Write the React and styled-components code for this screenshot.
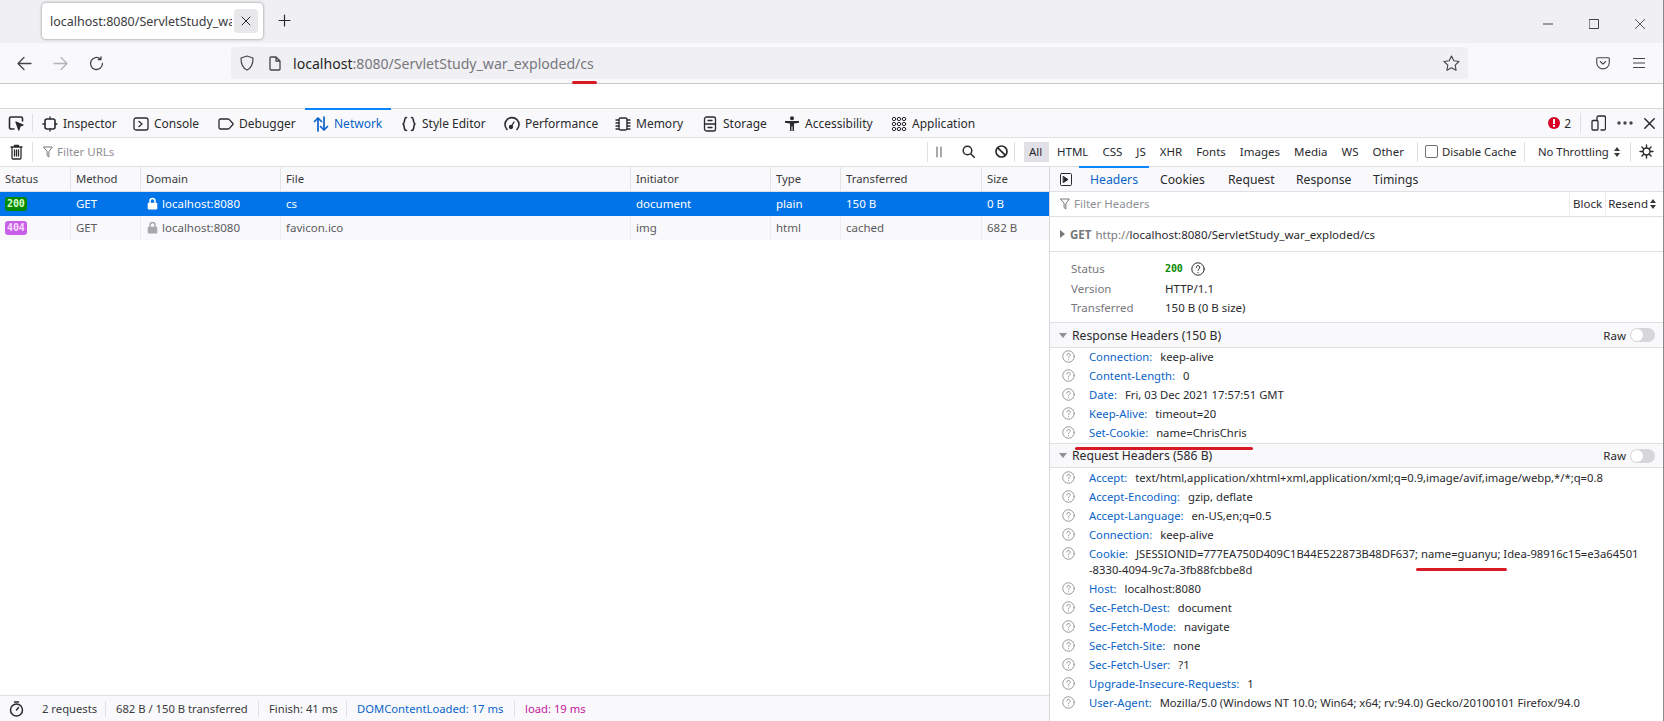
import React from "react";
import styled, { createGlobalStyle } from "styled-components";

const Global = createGlobalStyle`
  html, body { margin: 0; padding: 0; background: #fff; }
  body { font-family: "Noto Sans", "Liberation Sans", sans-serif; font-size: 11.5px; color: #2a2a2e; }
  * { box-sizing: border-box; }
`;

const Page = styled.div`
  position: relative; width: 1664px; height: 721px; overflow: hidden;
  display: flex; flex-direction: column; border-right: 1px solid #8a8a8a;
`;
const TabStrip = styled.div`
  height: 43px; background: #f0f0f4; display: flex; align-items: flex-start; padding: 3px 0 0 42px; flex: none;
`;
const BrowserTab = styled.div`
  width: 221px; height: 36px; background: #fff; border-radius: 4px; box-shadow: 0 0 3px rgba(0,0,0,.45);
  display: flex; align-items: center; padding: 0 5px 0 8px; gap: 2px;
`;
const TabTitle = styled.span`
  flex: 1; overflow: hidden; white-space: nowrap; font-size: 12.5px; color: #3c3c40;
`;
const TabClose = styled.span`
  width: 24px; height: 24px; background: #e8e8ea; border-radius: 4px; display: flex; align-items: center; justify-content: center; flex: none;
`;
const NewTab = styled.span`
  margin: 11px 0 0 15px; display: flex;
`;
const WinControls = styled.div`
  margin-left: auto; display: flex; gap: 36px; padding: 16px 18px 0 0;
`;
const NavBar = styled.div`
  height: 41px; background: #f9f9fb; border-bottom: 1px solid #c9c9cc; display: flex; align-items: flex-start; padding: 4px 0 0 17px; flex: none;
`;
const NavButtons = styled.div`
  display: flex; gap: 21px; width: 214px; padding-top: 9px;
`;
const UrlBar = styled.div`
  width: 1237px; height: 32px; border-radius: 4px; background: #f0f0f4; display: flex; align-items: center; padding: 0 8px 0 9px;
`;
const PageIconSlot = styled.span`
  width: 27px; display: flex; justify-content: flex-end; color: #45454a; flex: none;
`;
const Url = styled.span`
  font-size: 14.1px; color: #77777c; margin-left: 12px; flex: 1; white-space: nowrap;
  b { font-weight: 400; color: #1f1f23; }
`;
const NavRight = styled.div`
  display: flex; gap: 23px; padding: 10px 0 0 128px;
`;
const BlankPage = styled.div`
  height: 25px; flex: none; background: #fff; border-bottom: 1px solid #d7d7db;
`;
const DevBar = styled.div`
  height: 29px; flex: none; background: #f9f9fb; border-bottom: 1px solid #e0e0e2; display: flex; align-items: stretch;
`;
const PickSlot = styled.div`
  width: 36px; display: flex; align-items: center; padding-left: 8px; position: relative;
  &::after { content: ""; position: absolute; right: 3px; top: 5px; bottom: 5px; width: 1px; background: #e0e0e2; }
`;
const DevTab = styled.div`
  width: ${p => p.$w}px; padding-left: ${p => p.$pad}px; display: flex; align-items: center; gap: 5px; font-size: 12px; white-space: nowrap;
  color: ${p => (p.$active ? "#0a63c9" : "#2a2a2e")};
  border-top: 2px solid ${p => (p.$active ? "#0a84ff" : "transparent")};
  margin-top: -1px;
`;
const DevRight = styled.div`
  margin-left: auto; display: flex; align-items: center; padding-right: 8px;
`;
const ErrorCount = styled.span`
  display: flex; align-items: center; gap: 4px; font-size: 12px; padding-right: 9px; border-right: 1px solid #e0e0e2; height: 20px;
`;
const DevRightIcons = styled.span`
  display: flex; align-items: center; gap: 11px; padding-left: 10px;
`;
const FilterBar = styled.div`
  height: 29px; flex: none; background: #fff; border-bottom: 1px solid #e0e0e2; display: flex; align-items: center; padding-bottom: 1px;
`;
const Trash = styled.span`
  width: 33px; height: 20px; padding-left: 10px; border-right: 1px solid #e0e0e2; display: flex; align-items: center; flex: none;
`;
const FilterInput = styled.span`
  display: flex; align-items: center; gap: 4px; color: #8f8f94; font-size: 11.5px; padding-left: ${p => p.$pad || 10}px;
`;
const FilterTools = styled.div`
  margin-left: auto; display: flex; align-items: center; height: 100%;
`;
const ToolGroup = styled.span`
  display: flex; align-items: center; height: 20px; gap: ${p => p.$gap || 0}px; padding: ${p => p.$pad || "0"};
  border-left: 1px solid #e0e0e2; width: ${p => (p.$w ? `${p.$w}px` : "auto")}; flex: none; white-space: nowrap; font-size: 11.3px;
`;
const TypeBtn = styled.span`
  font-size: 11.5px; padding: 0 3px; margin-right: 8px; height: 20px; display: flex; align-items: center;
  background: ${p => (p.$on ? "#e0e0e6" : "transparent")};
  ${p => p.$on && "padding: 0 5px; margin-right: 5px; width: 25px;"}
`;
const Check = styled.span`
  width: 13px; height: 13px; border: 1px solid #6f6f74; border-radius: 2px; background: #fff; flex: none;
`;
const Main = styled.div`
  flex: 1; display: flex; min-height: 0;
`;
const LeftPane = styled.div`
  width: 1050px; flex: none; display: flex; flex-direction: column; border-right: 1px solid #d7d7db;
`;
const cols = "71px 70px 140px 350px 140px 70px 141px 67px";
const HeadRow = styled.div`
  height: 25px; display: grid; grid-template-columns: ${cols}; background: #f9f9fb; border-bottom: 1px solid #e0e0e2; flex: none;
`;
const HeadCell = styled.div`
  padding: 0 0 2px 5px; display: flex; align-items: center; border-right: 1px solid #e4e4e7; color: #3a3a3e; font-size: 11.3px;
  &:last-child { border-right: 0; }
`;
const Row = styled.div`
  height: 24px; display: grid; grid-template-columns: ${cols}; flex: none;
  background: ${p => (p.$sel ? "#0074e8" : "#f9f9fb")};
  color: ${p => (p.$sel ? "#fff" : "#5b5b60")};
`;
const Cell = styled.div`
  padding: 0 0 1px ${p => p.$pad || 5}px; display: flex; align-items: center; gap: 4px; font-size: 11.5px; white-space: nowrap;
  border-right: 1px solid ${p => (p.$sel ? "transparent" : "#ececef")};
  &:last-child { border-right: 0; }
`;
const Badge = styled.span`
  font-family: "DejaVu Sans Mono", "Liberation Mono", monospace; font-size: 10px; font-weight: 700; color: ${p => p.$c || "#fff"};
  background: ${p => p.$bg}; border-radius: 3px; padding: 0 2px; height: 14px; line-height: 14px; letter-spacing: -.1px;
`;
const Spacer = styled.div`
  flex: 1;
`;
const StatusBar = styled.div`
  height: 26px; flex: none; background: #f9f9fb; border-top: 1px solid #e0e0e2; display: flex; align-items: center; padding-left: 9px; font-size: 11.25px;
`;
const StopwatchSlot = styled.span`
  display: flex; width: 32px; flex: none;
`;
const Stat = styled.span`
  display: flex; align-items: center; height: 16px; padding-left: ${p => (p.$first ? 0 : 10)}px; white-space: nowrap; flex: none;
  width: ${p => p.$w}px;
  color: ${p => p.$c || "#3a3a3e"}; border-left: 1px solid ${p => (p.$first ? "transparent" : "#e0e0e2")};
`;
const Side = styled.div`
  flex: 1; min-width: 0; display: flex; flex-direction: column;
`;
const SideTabs = styled.div`
  height: 25px; flex: none; display: flex; align-items: stretch; background: #f9f9fb; border-bottom: 1px solid #e0e0e2; padding-left: 10px;
`;
const Collapse = styled.span`
  width: 19px; display: flex; align-items: center;
`;
const SideTab = styled.span`
  display: flex; align-items: center; width: ${p => p.$w}px; padding-left: 11px; font-size: 12.2px; margin-top: -1px;
  color: ${p => (p.$active ? "#0a63c9" : "#2a2a2e")};
  border-top: 2px solid ${p => (p.$active ? "#0a84ff" : "transparent")};
`;
const HeaderFilter = styled.div`
  height: 25px; flex: none; display: flex; align-items: center; border-bottom: 1px solid #e0e0e2; padding: 0 7px 1px 0;
`;
const BlockBtn = styled.span`
  margin-left: auto; display: flex; align-items: center; height: 23px; padding: 0 3px; border-left: 1px solid #ececef; border-right: 1px solid #ececef; font-size: 11.5px;
`;
const Resend = styled.span`
  display: flex; align-items: center; gap: 2px; padding-left: 2px; font-size: 11.5px;
`;
const GetRow = styled.div`
  height: 35px; flex: none; display: flex; align-items: center; padding-left: 10px; gap: 5px; border-bottom: 1px solid #e0e0e2; color: #77777c; font-size: 11.5px;
  b { color: #77777c; font-weight: 700; margin-right: 1px; }
  em { font-style: normal; color: #2a2a2e; }
`;
const Tri = styled.span`
  width: 0; height: 0; flex: none;
  ${p => (p.$down
    ? "border-left: 4px solid transparent; border-right: 4px solid transparent; border-top: 5px solid #8f8f94;"
    : "border-top: 4px solid transparent; border-bottom: 4px solid transparent; border-left: 5px solid #77777c;")}
`;
const Summary = styled.div`
  height: 71px; flex: none; padding: 6px 0 0 21px; border-bottom: 1px solid #e0e0e2;
`;
const SummaryRow = styled.div`
  height: ${p => p.$h || 19}px; display: flex; align-items: center; font-size: 11.5px;
`;
const SummaryLabel = styled.span`
  width: 94px; color: #77777c;
`;
const Band = styled.div`
  height: 25px; flex: none; display: flex; align-items: center; background: #f9f9fb; padding: 0 8px 0 9px; gap: 5px;
  border-bottom: 1px solid #e0e0e2; font-size: 12.2px;
  border-top: ${p => (p.$top ? "1px solid #e0e0e2" : "0")};
`;
const Raw = styled.span`
  margin-left: auto; display: flex; align-items: center; gap: 4px; font-size: 11.5px;
`;
const Toggle = styled.span`
  width: 25px; height: 14px; border-radius: 7px; background: #d7d7db; display: flex; align-items: center; padding-left: 1px;
  &::before { content: ""; width: 12px; height: 12px; border-radius: 50%; background: #fff; }
`;
const HeaderList = styled.div`
  padding-top: ${p => p.$top || 0}px; flex: none;
`;
const HeaderRow = styled.div`
  display: flex; align-items: flex-start; min-height: 19px; padding: 1px 0 2px 12px; gap: 14px; font-size: 11.25px; line-height: 16px;
`;
const HelpSlot = styled.span`
  flex: none; display: flex; margin-top: 1px; color: #8f8f94;
`;
const HeaderText = styled.span`
  flex: 1; min-width: 0; padding-right: 8px;
  i { font-style: normal; color: #0a63c9; margin-right: 5px; }
`;
const RedMark = styled.div`
  position: absolute; left: ${p => p.$x}px; top: ${p => p.$y}px; width: ${p => p.$w}px; height: 3px; background: #d91a25; border-radius: 2px;
`;

const Ic = ({ w = 16, h = 16, vb, children, ...r }) => (
  <svg width={w} height={h} viewBox={vb || `0 0 ${w} ${h}`} fill="none" stroke="currentColor" strokeWidth="1.3" strokeLinecap="round" strokeLinejoin="round" style={{ flex: "none" }} {...r}>{children}</svg>
);
const Help = ({ size = 13 }) => (
  <Ic w={size} h={size} vb="0 0 14 14" strokeWidth="1">
    <circle cx="7" cy="7" r="6.2" />
    <path d="M5.2 5.5a1.8 1.8 0 1 1 2.7 1.5c-.6.4-.9.7-.9 1.4" />
    <path d="M7 10.4v.2" />
  </Ic>
);
const Funnel = () => (
  <Ic w={10} h={12} vb="0 0 10 12" strokeWidth="1" color="#77777c"><path d="M.7 1h8.6L5.9 5.6V11L4.1 9.6v-4z" /></Ic>
);

const tabs = [
  { t: "Inspector", w: 91, pad: 6, icon: <Ic><rect x="3" y="3" width="10" height="10" rx="2" strokeWidth="1.6" /><path d="M8 .8v2M8 13v2M.8 8h2M13 8h2" /></Ic> },
  { t: "Console", w: 84, pad: 6, icon: <Ic><rect x="1" y="2" width="14" height="12" rx="2" /><path d="M6 5.5 9 8l-3 2.5" /></Ic> },
  { t: "Debugger", w: 94, pad: 7, icon: <Ic><path d="M2.5 3h7.6c.4 0 .7.1 1 .4l3.6 3.8c.4.5.4 1.1 0 1.6l-3.6 3.8c-.3.3-.6.4-1 .4H2.5c-.8 0-1.5-.7-1.5-1.5v-7C1 3.700 1.700 3 2.500 3z" /></Ic> },
  { t: "Network", w: 86, pad: 8, active: true, icon: <Ic color="#0a63c9" strokeWidth="1.7"><path d="M5 15V2M1.500 5.500 5 2l3.500 3.500M11 1v13M7.500 10.500 11 14l3.500-3.500" /></Ic> },
  { t: "Style Editor", w: 106, pad: 10, icon: <Ic strokeWidth="1.6"><path d="M5.500 1.500c-3 0-1 5.500-3.500 6.500 2.500 1-.5 6.500 3.500 6.500M10.500 1.500c3 0 1 5.500 3.500 6.500-2.500 1 .5 6.500-3.500 6.500" /></Ic> },
  { t: "Performance", w: 105, pad: 7, icon: <Ic><path d="M3 13.500A7 7 0 1 1 13 13.500" strokeWidth="1.600" /><circle cx="7" cy="11" r="1.500" fill="currentColor" /><path d="M7.500 10 10 6" /></Ic> },
  { t: "Memory", w: 93, pad: 13, icon: <Ic><rect x="4" y="2" width="8" height="12" rx="1.500" /><path d="M1 4h3M1 7h3M1 10h3M1 13h3M12 4h3M12 7h3M12 10h3M12 13h3" /></Ic> },
  { t: "Storage", w: 82, pad: 7, icon: <Ic><rect x="2.500" y="1" width="11" height="14" rx="2" /><path d="M2.500 8h11M6 4.500h4M6 11.500h4" /></Ic> },
  { t: "Accessibility", w: 108, pad: 7, icon: <Ic strokeWidth="0" fill="currentColor"><circle cx="8" cy="2.200" r="2" /><path d="M1 5h14v1.800l-5 .7V15H8.500v-4.500h-1V15H6V7.500l-5-.7z" /></Ic> },
  { t: "Application", w: 98, pad: 6, icon: <Ic strokeWidth="1">{[3, 8, 13].flatMap(y => [3, 8, 13].map(x => <circle key={`${x}${y}`} cx={x} cy={y} r="1.700" />))}</Ic> },
];

const respHeaders = [
  ["Connection:", "keep-alive"],
  ["Content-Length:", "0"],
  ["Date:", "Fri, 03 Dec 2021 17:57:51 GMT"],
  ["Keep-Alive:", "timeout=20"],
  ["Set-Cookie:", "name=ChrisChris"],
];
const reqHeaders = [
  ["Accept:", "text/html,application/xhtml+xml,application/xml;q=0.9,image/avif,image/webp,*/*;q=0.8"],
  ["Accept-Encoding:", "gzip, deflate"],
  ["Accept-Language:", "en-US,en;q=0.5"],
  ["Connection:", "keep-alive"],
  ["Cookie:", <React.Fragment key="c">JSESSIONID=777EA750D409C1B44E522873B48DF637; name=guanyu; Idea-98916c15=e3a64501<br />-8330-4094-9c7a-3fb88fcbbe8d</React.Fragment>],
  ["Host:", "localhost:8080"],
  ["Sec-Fetch-Dest:", "document"],
  ["Sec-Fetch-Mode:", "navigate"],
  ["Sec-Fetch-Site:", "none"],
  ["Sec-Fetch-User:", "?1"],
  ["Upgrade-Insecure-Requests:", "1"],
  ["User-Agent:", "Mozilla/5.0 (Windows NT 10.0; Win64; x64; rv:94.0) Gecko/20100101 Firefox/94.0"],
];
const Headers = ({ items }) => items.map(([k, v]) => (
  <HeaderRow key={k}>
    <HelpSlot><Help /></HelpSlot>
    <HeaderText><i>{k}</i> {v}</HeaderText>
  </HeaderRow>
));
const Lock = ({ c }) => (
  <Ic w={11} h={13} vb="0 0 11 13" stroke={c} strokeWidth="1.500"><path d="M3 6V4a2.500 2.500 0 0 1 5 0v2" /><rect x=".7" y="5.700" width="9.600" height="6.800" rx="1" fill={c} strokeWidth="0" /></Ic>
);
const Updown = () => (
  <svg width="6" height="10" viewBox="0 0 6 10" style={{ flex: "none" }}><path d="M3 0 6 4H0zM3 10 0 6h6z" fill="#3a3a3e" /></svg>
);

export default function App() {
  return (
    <Page>
      <Global />
      <TabStrip>
        <BrowserTab>
          <TabTitle>localhost:8080/ServletStudy_war_exploded/cs</TabTitle>
          <TabClose><Ic w={10} h={10} strokeWidth="1"><path d="M1 1l8 8M9 1l-8 8" /></Ic></TabClose>
        </BrowserTab>
        <NewTab><Ic w={13} h={13} strokeWidth="1.200"><path d="M6.500 1v11M1 6.500h11" /></Ic></NewTab>
        <WinControls>
          <Ic w={10} h={10} strokeWidth="1" color="#444"><path d="M0 5h10" /></Ic>
          <Ic w={10} h={10} strokeWidth="1" color="#444"><rect x=".5" y=".5" width="9" height="9" /></Ic>
          <Ic w={10} h={10} strokeWidth=".9" color="#444"><path d="M0 0l10 10M10 0 0 10" /></Ic>
        </WinControls>
      </TabStrip>
      <NavBar>
        <NavButtons>
          <Ic w={15} h={15} strokeWidth="1.300" color="#45454a"><path d="M14 7.500H1M7 1.500l-6 6 6 6" /></Ic>
          <Ic w={15} h={15} strokeWidth="1.300" color="#b3b3b8"><path d="M1 7.500h13M8 1.500l6 6-6 6" /></Ic>
          <Ic w={15} h={15} strokeWidth="1.300" color="#45454a"><path d="M13.500 7.500a6 6 0 1 1-2-4.500M12 .8V3.500H9.300" /></Ic>
        </NavButtons>
        <UrlBar>
          <Ic w={14} h={16} vb="0 0 14 16" strokeWidth="1.200" color="#45454a"><path d="M7 1 1 3c0 6 1 10 6 12 5-2 6-6 6-12z" /></Ic>
          <PageIconSlot>
            <Ic w={12} h={15} vb="0 0 12 15" strokeWidth="1.300"><path d="M2 1h5l4 4v8a1 1 0 0 1-1 1H2a1 1 0 0 1-1-1V2a1 1 0 0 1 1-1zM7 1v4h4" /></Ic>
          </PageIconSlot>
          <Url><b>localhost</b>:8080/ServletStudy_war_exploded/cs</Url>
          <Ic w={17} h={16} vb="0 0 17 16" strokeWidth="1.100" color="#45454a"><path d="m8.500 1 2.300 4.800 5.200.7-3.800 3.600.9 5.200-4.600-2.500-4.600 2.500.9-5.200L1 6.500l5.200-.7z" /></Ic>
        </UrlBar>
        <NavRight>
          <Ic w={14} h={13} vb="0 0 14 13" strokeWidth="1.100" color="#45454a"><path d="M1.500.8h11c.4 0 .8.4.8.8v4a6.300 6.300 0 0 1-12.600 0v-4c0-.4.400-.8.800-.8zM4.300 4.500 7 7.200l2.700-2.700" /></Ic>
          <Ic w={12} h={12} strokeWidth="1.100" color="#45454a"><path d="M0 1.500h12M0 6h12M0 10.500h12" /></Ic>
        </NavRight>
      </NavBar>
      <BlankPage />
      <DevBar>
        <PickSlot>
          <Ic w={16} h={16}><path d="M6 14H3a1.500 1.500 0 0 1-1.500-1.500v-9A1.500 1.500 0 0 1 3 2h10a1.500 1.500 0 0 1 1.500 1.500V6" strokeWidth="1.600" /><path d="m8 7 7 3-3 1.200L10.800 15z" fill="currentColor" /></Ic>
        </PickSlot>
        {tabs.map(t => (
          <DevTab key={t.t} $w={t.w} $pad={t.pad} $active={t.active}>{t.icon}{t.t}</DevTab>
        ))}
        <DevRight>
          <ErrorCount>
            <Ic w={12} h={12} vb="0 0 12 12" strokeWidth="0"><circle cx="6" cy="6" r="6" fill="#d70022" /><rect x="5" y="2" width="2" height="5" fill="#fff" /><rect x="5" y="8" width="2" height="2" fill="#fff" /></Ic>
            2
          </ErrorCount>
          <DevRightIcons>
            <Ic w={15} h={16} vb="0 0 15 16" strokeWidth="1.300"><path d="M6 5.500V2.500A1.500 1.500 0 0 1 7.500 1h5.500A1.500 1.500 0 0 1 14.500 2.500v11a1.500 1.500 0 0 1-1.500 1.500H10" /><rect x="1" y="5.500" width="6" height="9.500" rx="1" /></Ic>
            <Ic w={16} h={4} vb="0 0 16 4" strokeWidth="0"><circle cx="2" cy="2" r="1.700" fill="#45454a" /><circle cx="8" cy="2" r="1.700" fill="#45454a" /><circle cx="14" cy="2" r="1.700" fill="#45454a" /></Ic>
            <Ic w={11} h={11} strokeWidth="1.500"><path d="M.8.800l9.400 9.400M10.200.800.800 10.200" /></Ic>
          </DevRightIcons>
        </DevRight>
      </DevBar>
      <FilterBar>
        <Trash>
          <Ic w={13} h={16} vb="0 0 13 16" strokeWidth="1.300"><path d="M1 3h11M4.500 3V1.500h4V3M2 3v11a1 1 0 0 0 1 1h7a1 1 0 0 0 1-1V3M4.500 6v6M6.500 6v6M8.500 6v6" /></Ic>
        </Trash>
        <FilterInput><Funnel />Filter URLs</FilterInput>
        <FilterTools>
          <ToolGroup $w={87} $pad="0 0 0 8px" $gap={20}>
            <Ic w={6} h={12} vb="0 0 6 12" strokeWidth=".8"><path d="M1 1v10M5 1v10" /></Ic>
            <Ic w={13} h={13} strokeWidth="1.500"><circle cx="5.500" cy="5.500" r="4.300" /><path d="m9 9 3.500 3.500" /></Ic>
            <Ic w={13} h={13} strokeWidth="1.700"><circle cx="6.500" cy="6.500" r="5.500" /><path d="m2.800 2.800 7.400 7.400" /></Ic>
          </ToolGroup>
          <ToolGroup $w={403} $pad="0 0 0 9px">
            <TypeBtn $on>All</TypeBtn><TypeBtn>HTML</TypeBtn><TypeBtn>CSS</TypeBtn><TypeBtn>JS</TypeBtn><TypeBtn>XHR</TypeBtn><TypeBtn>Fonts</TypeBtn><TypeBtn>Images</TypeBtn><TypeBtn>Media</TypeBtn><TypeBtn>WS</TypeBtn><TypeBtn>Other</TypeBtn>
          </ToolGroup>
          <ToolGroup $w={107} $pad="0 0 0 7px" $gap={4}><Check /><span>Disable Cache</span></ToolGroup>
          <ToolGroup $w={106} $pad="0 0 0 13px" $gap={5}><span>No Throttling</span><Updown /></ToolGroup>
          <ToolGroup $w={33} $pad="0 0 0 8px">
            <Ic w={15} h={15} strokeWidth="1.400"><circle cx="7.500" cy="7.500" r="3.500" /><path d="M7.500 1v2.500M7.500 11.500V14M1 7.500h2.500M11.500 7.500H14M2.900 2.900l1.800 1.800M10.300 10.300l1.800 1.800M2.900 12.100l1.800-1.800M10.300 4.700l1.800-1.800" /></Ic>
          </ToolGroup>
        </FilterTools>
      </FilterBar>
      <Main>
        <LeftPane>
          <HeadRow>
            {["Status", "Method", "Domain", "File", "Initiator", "Type", "Transferred", "Size"].map(h => <HeadCell key={h}>{h}</HeadCell>)}
          </HeadRow>
          <Row $sel>
            <Cell $sel><Badge $bg="#058b00" $c="#d9ffd0">200</Badge></Cell>
            <Cell $sel>GET</Cell>
            <Cell $sel $pad={6}><Lock c="#fff" />localhost:8080</Cell>
            <Cell $sel>cs</Cell>
            <Cell $sel>document</Cell>
            <Cell $sel>plain</Cell>
            <Cell $sel>150 B</Cell>
            <Cell $sel>0 B</Cell>
          </Row>
          <Row>
            <Cell><Badge $bg="#c95fe6" $c="#f6dcff">404</Badge></Cell>
            <Cell>GET</Cell>
            <Cell $pad={6}><Lock c="#a8a8ad" />localhost:8080</Cell>
            <Cell>favicon.ico</Cell>
            <Cell>img</Cell>
            <Cell>html</Cell>
            <Cell>cached</Cell>
            <Cell>682 B</Cell>
          </Row>
          <Spacer />
          <StatusBar>
            <StopwatchSlot><Ic w={15} h={16} vb="0 0 15 16" strokeWidth="1.500"><circle cx="7.500" cy="9" r="6" /><path d="M5.500 1h4M7.500 9l2-2.500" /></Ic></StopwatchSlot>
            <Stat $first $w={64}>2 requests</Stat>
            <Stat $w={153}>682 B / 150 B transferred</Stat>
            <Stat $w={88}>Finish: 41 ms</Stat>
            <Stat $w={168} $c="#0a63c9">DOMContentLoaded: 17 ms</Stat>
            <Stat $w={80} $c="#c5159f">load: 19 ms</Stat>
          </StatusBar>
        </LeftPane>
        <Side>
          <SideTabs>
            <Collapse><Ic w={12} h={13} vb="0 0 12 13" strokeWidth="1"><rect x=".5" y=".5" width="11" height="12" rx="1" /><path d="M3.500 3.500 8 6.500l-4.500 3z" fill="currentColor" /></Ic></Collapse>
            <SideTab $active $w={70}>Headers</SideTab>
            <SideTab $w={68}>Cookies</SideTab>
            <SideTab $w={68}>Request</SideTab>
            <SideTab $w={77}>Response</SideTab>
            <SideTab $w={60}>Timings</SideTab>
          </SideTabs>
          <HeaderFilter>
            <FilterInput><Funnel /><span>Filter Headers</span></FilterInput>
            <BlockBtn>Block</BlockBtn>
            <Resend>Resend<Updown /></Resend>
          </HeaderFilter>
          <GetRow>
            <Tri />
            <span><b>GET</b> http://<em>localhost:8080/ServletStudy_war_exploded/cs</em></span>
          </GetRow>
          <Summary>
            <SummaryRow $h={21}>
              <SummaryLabel>Status</SummaryLabel>
              <Badge $bg="transparent" $c="#058b00" style={{ padding: 0, marginRight: 8 }}>200</Badge>
              <Help size={14} />
            </SummaryRow>
            <SummaryRow><SummaryLabel>Version</SummaryLabel>HTTP/1.1</SummaryRow>
            <SummaryRow><SummaryLabel>Transferred</SummaryLabel>150 B (0 B size)</SummaryRow>
          </Summary>
          <Band><Tri $down />Response Headers (150 B)<Raw>Raw<Toggle /></Raw></Band>
          <HeaderList><Headers items={respHeaders} /></HeaderList>
          <Band $top><Tri $down />Request Headers (586 B)<Raw>Raw<Toggle /></Raw></Band>
          <HeaderList $top={1}><Headers items={reqHeaders} /></HeaderList>
        </Side>
      </Main>
      <RedMark $x={572} $y={81} $w={25} />
      <RedMark $x={1075} $y={447} $w={178} />
      <RedMark $x={1416} $y={568} $w={91} />
    </Page>
  );
}
